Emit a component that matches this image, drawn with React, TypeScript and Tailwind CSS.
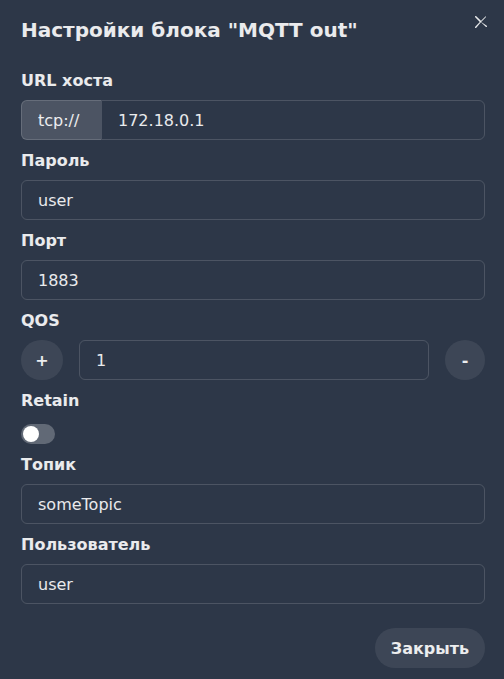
import type { ReactNode } from 'react'

const FONT = { fontFamily: '"DejaVu Sans", "Liberation Sans", sans-serif' }

function Label({ children }: { children: ReactNode }) {
  return <div className="h-6 pt-px mb-2 text-base leading-6 font-bold text-white/90">{children}</div>
}

function TextInput({ value }: { value: string }) {
  return (
    <div className="h-10 flex items-center px-4 pt-0.5 rounded-md border border-white/15 text-base text-white/90">
      {value}
    </div>
  )
}

function Field({ label, children }: { label: string; children: ReactNode }) {
  return (
    <div className="mb-2">
      <Label>{label}</Label>
      {children}
    </div>
  )
}

export default function App() {
  return (
    <div style={FONT} className="relative w-[504px] h-[679px] overflow-hidden bg-[#2d3748] text-white/90">
      {/* header */}
      <div className="pl-[21px] pr-[19px] pt-[15px] pb-[15px]">
        <h2 className="text-xl leading-[30px] font-bold">Настройки блока "MQTT out"</h2>
      </div>
      <button className="absolute top-[6px] right-[7px] w-8 h-8 flex items-center justify-center rounded-md text-white/90">
        <svg viewBox="0 0 24 24" width="12" height="12" fill="currentColor">
          <path d="M.439,21.44a1.5,1.5,0,0,0,2.122,2.121L11.823,12.3a.25.25,0,0,1,.354,0l9.262,9.263a1.5,1.5,0,1,0,2.122-2.121L12.3,12.177a.25.25,0,0,1,0-.354l9.263-9.262A1.5,1.5,0,0,0,21.439.44L12.177,9.7a.25.25,0,0,1-.354,0L2.561.44A1.5,1.5,0,0,0,.439,2.561L9.7,11.823a.25.25,0,0,1,0,.354Z" />
        </svg>
      </button>

      {/* body */}
      <div className="pl-[21px] pr-[19px] pt-2">
        <Field label="URL хоста">
          <div className="flex h-10">
            <div className="w-20 flex items-center px-4 pt-0.5 rounded-l-md bg-white/15 border border-white/15 border-r-0 text-base">
              tcp://
            </div>
            <div className="flex-1 flex items-center px-4 pt-0.5 rounded-r-md border border-white/15 text-base">
              172.18.0.1
            </div>
          </div>
        </Field>
        <Field label="Пароль">
          <TextInput value="user" />
        </Field>
        <Field label="Порт">
          <TextInput value="1883" />
        </Field>
        <Field label="QOS">
          <div className="flex items-center gap-4">
            <button className="w-[42px] h-10 pt-0.5 rounded-full bg-white/[0.08] text-base font-bold">+</button>
            <div className="flex-1">
              <TextInput value="1" />
            </div>
            <button className="w-10 h-10 pt-0.5 rounded-full bg-white/[0.08] text-base font-bold">-</button>
          </div>
        </Field>
        <Field label="Retain">
          <div className="h-6 pt-1">
            <div className="w-[34px] h-5 p-[2px] rounded-full bg-white/25">
              <div className="w-4 h-4 rounded-full bg-white" />
            </div>
          </div>
        </Field>
        <Field label="Топик">
          <TextInput value="someTopic" />
        </Field>
        <Field label="Пользователь">
          <TextInput value="user" />
        </Field>
      </div>

      {/* footer */}
      <div className="flex justify-end pl-[21px] pr-[19px] py-4">
        <button className="w-[110px] h-10 pt-0.5 rounded-full bg-white/[0.08] text-base font-bold text-white/90">
          Закрыть
        </button>
      </div>
    </div>
  )
}
